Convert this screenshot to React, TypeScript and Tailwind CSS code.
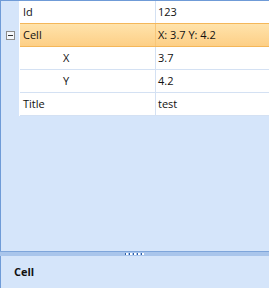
const rows = [
  { name: 'Id', value: '123', indent: false, toggle: false, selected: false },
  { name: 'Cell', value: 'X: 3.7 Y: 4.2', indent: false, toggle: true, selected: true },
  { name: 'X', value: '3.7', indent: true, toggle: false, selected: false },
  { name: 'Y', value: '4.2', indent: true, toggle: false, selected: false },
  { name: 'Title', value: 'test', indent: false, toggle: false, selected: false },
];

function MinusBox() {
  return (
    <div className="w-[9px] h-[9px] border border-[#8c8c8c] bg-[#f4f7fb] flex items-center justify-center">
      <div className="w-[5px] h-px bg-[#333]" />
    </div>
  );
}

function GripDots() {
  return (
    <div className="flex gap-[1px]">
      {[0, 1, 2, 3, 4].map(i => (
        <div key={i} className="flex">
          <div className="w-px h-[2px] bg-[#2e5fa8]" />
          <div className="w-[2px] h-[2px] bg-white" />
        </div>
      ))}
    </div>
  );
}

export default function App() {
  return (
    <div
      className="w-[269px] h-[288px] bg-[#d5e5fa] flex flex-col text-[11px] text-[#111]"
      style={{ fontFamily: '"Open Sans", "Noto Sans", sans-serif' }}
    >
      {/* Grid */}
      <div className="flex-1 flex flex-col border-l border-t border-[#6f9bd7]">
        {rows.map(row => (
          <div key={row.name} className="flex h-[23px]">
            {/* Gutter */}
            <div className="w-[18px] flex items-center justify-center">
              {row.toggle && <MinusBox />}
            </div>
            <div className="w-px bg-white" />
            {/* Cells */}
            <div
              className={
                row.selected
                  ? 'flex-1 flex border-y border-[#f4b75a] bg-gradient-to-b from-[#ffe3ab] to-[#fdcf86] -mt-px h-[24px]'
                  : 'flex-1 flex bg-white border-b border-[#d4e1f3]'
              }
            >
              <div className={`w-[135px] flex items-center ${row.indent ? 'pl-[43px]' : 'pl-[3px]'}`}>
                {row.name}
              </div>
              <div
                className={`flex-1 flex items-center pl-[2px] border-l ${
                  row.selected ? 'border-[#f7c679]' : 'border-[#d4e1f3]'
                }`}
              >
                {row.value}
              </div>
            </div>
          </div>
        ))}
      </div>

      {/* Splitter */}
      <div className="h-[5px] border-t border-[#7ea5da] bg-[#a9c5eb] flex items-center justify-center">
        <GripDots />
      </div>

      {/* Description */}
      <div className="h-[32px] border-l border-[#6f9bd7] flex items-center pl-[13px] font-bold">
        Cell
      </div>
    </div>
  );
}
